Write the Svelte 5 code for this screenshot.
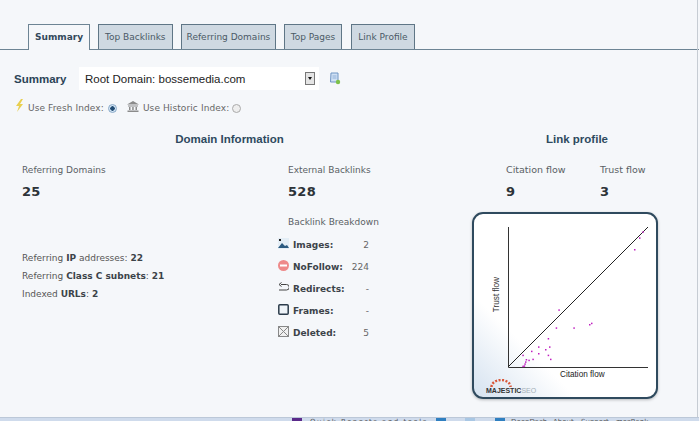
<script>
  const tabs = ['Top Backlinks', 'Referring Domains', 'Top Pages', 'Link Profile'];
  const extra = [
    ['Referring ', 'IP', ' addresses: ', '22'],
    ['Referring ', 'Class C subnets', ': ', '21'],
    ['Indexed ', 'URLs', ': ', '2']
  ];
  const rows = [
    ['img', 'Images:', '2'],
    ['no', 'NoFollow:', '224'],
    ['redir', 'Redirects:', '-'],
    ['frame', 'Frames:', '-'],
    ['del', 'Deleted:', '5']
  ];
  const raw = [[532,82],[522,100],[507,135],[280,316],[272,370],[325,370],[372,360],[378,356],[248,402],[252,427],[240,435],[219,427],[198,440],[219,447],[248,452],[255,464],[202,464],[172,452],[190,467],[182,465],[180,472],[178,478],[172,485],[176,484]];
  const dots = raw.map(([x, y]) => [x / 3 - 7, y / 3 - 8]);
</script>

<div class="page">
  <nav class="tabs">
    <span class="tab active">Summary</span>
    {#each tabs as t}<span class="tab">{t}</span>{/each}
  </nav>

  <div class="select-row">
    <b class="label">Summary</b>
    <div class="select">
      <span>Root Domain: bossemedia.com</span>
      <i class="arrow"></i>
    </div>
    <svg class="doc" width="12" height="13" viewBox="0 0 12 13">
      <path d="M2 1h7v9H1.500z" fill="#cfe0f4" stroke="#6f95c4"/>
      <path d="M3.500 4h4M3.500 6h4" stroke="#8fb0d8"/>
      <circle cx="9" cy="10" r="2.200" fill="#7cc04a"/>
    </svg>
  </div>

  <div class="index-row">
    <svg class="bolt" width="9" height="13" viewBox="0 0 9 13"><path d="M6 0 1 7h3L2 13l6-8H5l3-5z" fill="#e8cf50"/></svg>
    <span class="idx first">Use Fresh Index:</span>
    <i class="radio on"></i>
    <svg class="bank" width="12" height="11" viewBox="0 0 12 11"><path d="M6 0 0 3.500h12zM1 4.500h10v1H1zM2 6h1.500v3H2zM5.200 6h1.500v3H5.200zM8.500 6H10v3H8.500zM.5 9.500h11V11H.5z" fill="#8b8b8b"/></svg>
    <span class="idx">Use Historic Index:</span>
    <i class="radio off"></i>
  </div>

  <div class="main">
    <section class="domain">
      <h3>Domain Information</h3>
      <div class="cols">
        <div class="left">
          <div class="caption">Referring Domains</div>
          <div class="big">25</div>
          <ul class="extra">
            {#each extra as e}
              <li>{e[0]}<b>{e[1]}</b>{e[2]}<b>{e[3]}</b></li>
            {/each}
          </ul>
        </div>
        <div class="mid">
          <div class="caption">External Backlinks</div>
          <div class="big">528</div>
          <div class="caption bd">Backlink Breakdown</div>
          <div class="rows">
            {#each rows as r}
              <div class="row">
                <svg class="ico" width="11" height="11" viewBox="0 0 11 11">
                  {#if r[0] === 'img'}
                    <rect x="0" y="0" width="11" height="11" fill="#e4eef6"/>
                    <path d="M0 10 4 5l3 3 2-1 2 3z" fill="#2b5a80"/>
                    <rect x="1" y="1" width="2" height="2" fill="#222"/>
                  {:else if r[0] === 'no'}
                    <circle cx="5.500" cy="5.500" r="5.500" fill="#ee8a8a"/>
                    <rect x="2" y="4.500" width="7" height="2" fill="#fff"/>
                  {:else if r[0] === 'redir'}
                    <path d="M3 2.500h5.500a2.500 2.500 0 0 1 0 5.500H1" fill="none" stroke="#444"/>
                    <path d="M3.500 .5 1 2.500l2.500 2" fill="none" stroke="#444"/>
                  {:else if r[0] === 'frame'}
                    <rect x=".8" y=".8" width="9.400" height="9.400" rx="1" fill="#eef3f8" stroke="#2b3b4a" stroke-width="1.500"/>
                  {:else}
                    <rect x=".5" y=".5" width="10" height="10" fill="#f0f0f0" stroke="#888"/>
                    <path d="m1 1 9 9M10 1l-9 9" stroke="#888"/>
                  {/if}
                </svg>
                <b class="name">{r[1]}</b>
                <span class="val">{r[2]}</span>
              </div>
            {/each}
          </div>
        </div>
      </div>
    </section>

    <section class="profile">
      <h3>Link profile</h3>
      <div class="flows">
        <div class="flow"><div class="caption fc">Citation flow</div><div class="big">9</div></div>
        <div class="flow"><div class="caption fc">Trust flow</div><div class="big">3</div></div>
      </div>
      <div class="chart">
        <svg class="plot" width="186" height="187" viewBox="0 0 186 187">
          <path d="M36.500 15v140.500H176" fill="none" stroke="#333"/>
          <path d="M36 155 176 15" stroke="#222"/>
          {#each dots as d}
            <rect x={d[0]} y={d[1]} width="1.500" height="1.500" fill="#c020c0"/>
          {/each}
        </svg>
        <span class="ylab">Trust flow</span>
        <span class="xlab">Citation flow</span>
        <div class="logo">
          <svg class="arc" width="22" height="8" viewBox="0 0 22 8"><path d="M1.500 8a9.500 7 0 0 1 19 0" fill="none" stroke="#d9583a" stroke-width="2.500" stroke-dasharray="2 1.500"/></svg>
          <span><b>MAJESTIC</b>SEO</span>
        </div>
      </div>
    </section>
  </div>

  <footer class="foot">
    <i class="sq p"></i><span class="blur q">Quick Reports and tools</span>
    <i class="sq b b1"></i><i class="sq l"></i><i class="sq b b2"></i>
    <span class="blur d">DeepDash</span>
    <span class="blur a">About</span><span class="blur s">Support</span><span class="blur">mozRank</span>
  </footer>
</div>

<style>
  :global(body) { margin: 0; background: #f5f7fa; }
  .page {
    width: 700px; height: 421px; overflow: hidden; box-sizing: border-box;
    position: relative; display: flex; flex-direction: column;
    font-family: "DejaVu Sans", sans-serif; font-size: 9px; color: #555;
    background: #f5f7fa;
    border-right: 1px solid #f5f7fa;
  }
  .page::after {
    content: ""; position: absolute; right: 1px; top: 0; bottom: 4px; width: 1px; background: #c6ccd3;
  }
  .tabs {
    display: flex; gap: 8px; height: 25px; margin-top: 24px; padding-left: 28px;
    border-bottom: 1px solid #6d8494;
    flex: none;
  }
  .tab {
    height: 25px; box-sizing: border-box; padding: 0 6px; line-height: 24px;
    background: #cfd9e2; border: 1px solid #5f7686; border-bottom: 0; color: #4b5a66;
  }
  .tab:nth-child(3) { padding: 0 5px; }
  .tab:nth-child(4) { padding: 0 6px 0 5.500px; margin-right: 1px; }
  .tab.active { background: #f5f7fa; height: 26px; font-weight: bold; color: #33495b; padding: 0 6px; border-color: #6d8494; }
  .select-row { display: flex; align-items: center; margin-top: 17px; padding-left: 14px; height: 23px; flex: none; }
  .label { font: bold 11.500px "Liberation Sans", sans-serif; color: #2b4356; width: 65px; }
  .select {
    width: 240px; height: 23px; box-sizing: border-box; background: #fff; padding-left: 6px;
    display: flex; align-items: center; justify-content: space-between;
    font: 11.500px "Liberation Sans", sans-serif; color: #222;
  }
  .arrow {
    width: 10px; height: 13px; margin-right: 4px; box-sizing: border-box; background: #e4e4e4;
    border: 1px solid #777; position: relative;
  }
  .arrow::after {
    content: ""; position: absolute; left: 2px; top: 4px;
    border: 2px solid transparent; border-top: 3px solid #111;
  }
  .doc { margin-left: 10px; }
  .index-row { display: flex; align-items: center; margin-top: 11px; padding-left: 15px; height: 14px; flex: none; letter-spacing: .1px; }
  .bolt { margin-top: -5px; }
  .idx { margin-left: 3px; color: #666; }
  .idx.first { margin-left: 4px; }
  .bank { margin-left: 10px; margin-right: 1px; margin-top: -3px; }
  .radio {
    width: 7px; height: 7px; border-radius: 50%; border: 1px solid #aaa; margin-left: 4px; background: #eee;
    box-sizing: content-box;
  }
  .radio.off { margin-left: 3px; }
  .radio.on { background: radial-gradient(circle, #234d75 40%, #d5e6f5 50%); border-color: #88a9c8; }
  .main { display: flex; flex: 1; margin-top: 16px; }
  h3 { margin: 0; font: bold 11.500px "Liberation Sans", sans-serif; color: #2e4a5f; text-align: center; line-height: 16px; }
  .domain { width: 459px; flex: none; }
  .cols { display: flex; margin-top: 16px; }
  .left { width: 288px; padding-left: 22px; box-sizing: border-box; flex: none; }
  .caption { line-height: 14px; color: #5a5f65; }
  .fc { font-size: 9.500px; }
  .big { font-weight: bold; font-size: 13px; line-height: 17px; margin-top: 6px; color: #2d3338; letter-spacing: .3px; }
  .extra { list-style: none; margin: 49px 0 0; padding: 0; }
  .extra li { line-height: 18px; }
  .extra b { color: #3c4349; }
  .bd { margin-top: 15px; }
  .rows { margin-top: 5px; margin-left: -10px; }
  .row { display: flex; align-items: center; height: 22px; }
  .ico { flex: none; margin-top: -4px; }
  .name { margin-left: 4px; width: 56px; color: #3c4349; white-space: nowrap; }
  .val { width: 20px; text-align: right; flex: none; color: #666; }
  .profile { width: 241px; flex: none; position: relative; }
  .profile h3 { padding-right: 5px; }
  .flows { display: flex; margin-top: 16px; padding-left: 47px; }
  .flow { width: 94px; }
  .chart {
    position: relative; margin: 12px 0 0 13px; width: 186px; height: 187px; box-sizing: border-box;
    border: 2px solid #2f4a5e; border-radius: 11px; overflow: hidden;
    background: linear-gradient(45deg, #d5e2f0 0, #fff 28%);
    box-shadow: 0 1px 3px rgba(0, 0, 0, .25);
  }
  .plot { position: absolute; left: -2px; top: -2px; }
  .ylab, .xlab { position: absolute; font: 8.200px "Liberation Sans", sans-serif; color: #222; white-space: nowrap; }
  .ylab { left: 18px; top: 63px; writing-mode: vertical-rl; transform: rotate(180deg); color: #333; }
  .xlab { left: 86px; top: 156px; }
  .logo { position: absolute; left: 12px; top: 165px; font: 7px/8px "Liberation Sans", sans-serif; color: #a5b0b8; display: flex; flex-direction: column; }
  .arc { display: block; margin-left: 4px; }
  .logo b { color: #333; }
  .foot {
    position: absolute; left: 0; right: -1px; bottom: 0; height: 4px; overflow: hidden; background: #cfdbec;
    border-top: 1px solid #bcc8d8;
    display: flex; align-items: flex-start; padding-left: 292px; font-size: 7px; line-height: 8px; color: #555; box-sizing: border-box;
  }
  .foot .sq { width: 10px; height: 8px; flex: none; }
  .sq.p { background: #5a2a8a; }
  .sq.b { background: #2f7fc0; }
  .sq.l { background: #a9c7e4; }
  .sq.b1 { margin-left: 9px; margin-right: 19px; }
  .sq.b2 { margin-left: 20px; margin-right: 6px; }
  .blur { white-space: nowrap; }
  .q { margin-left: 8px; width: 117px; letter-spacing: 1.500px; overflow: hidden; }
  .d { width: 42px; }
  .a { width: 28px; }
  .s { width: 35px; }
</style>
